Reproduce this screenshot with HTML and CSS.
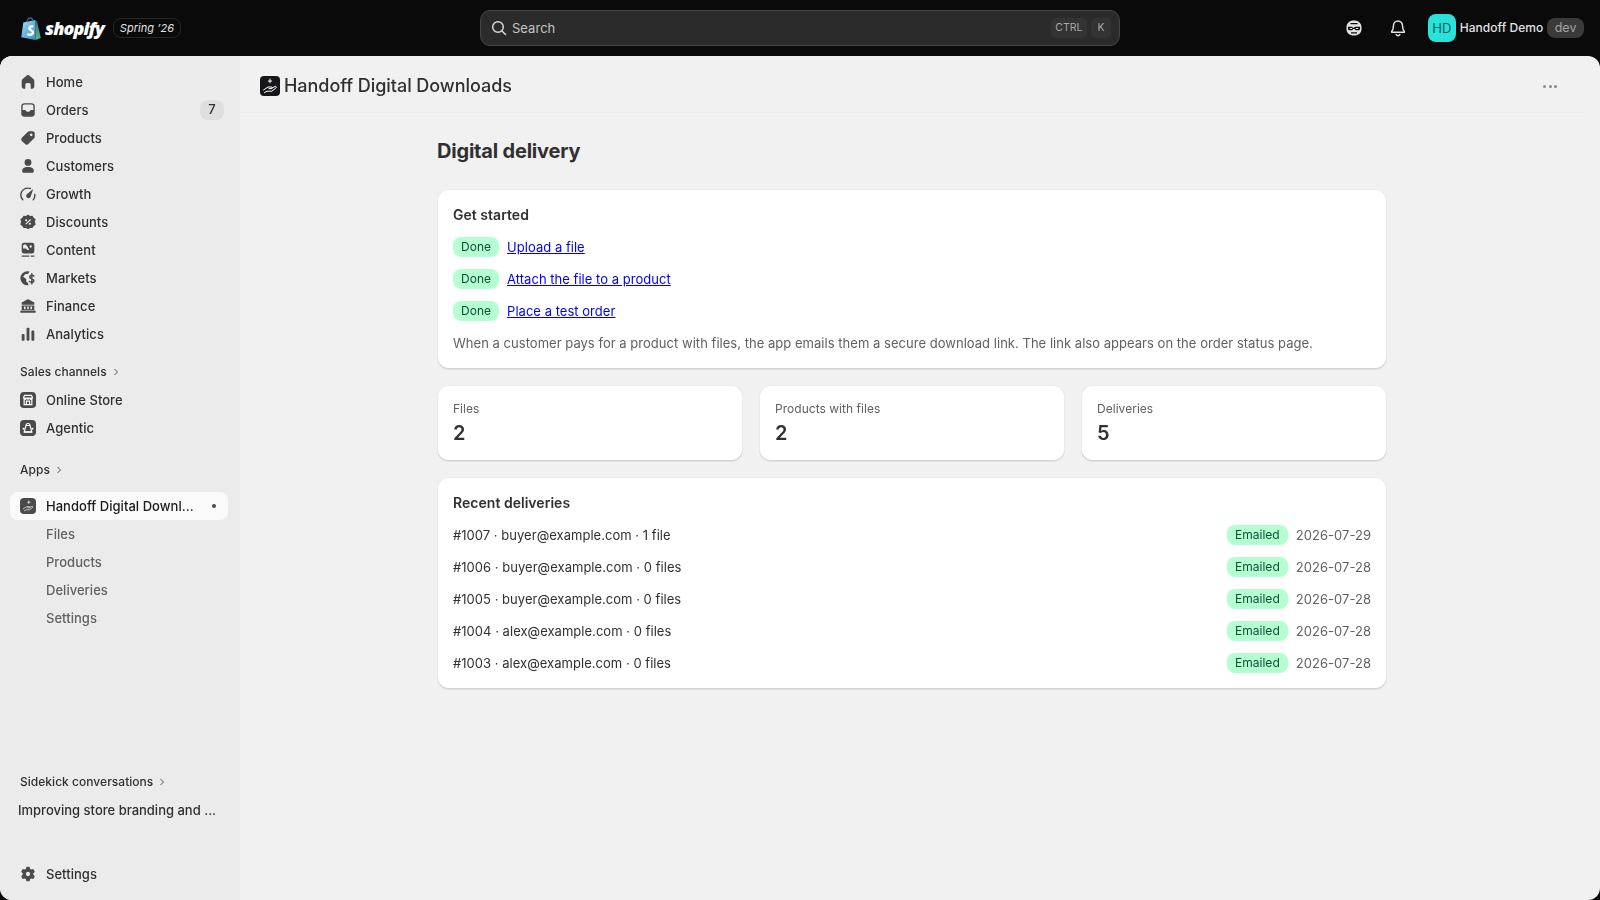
FILE: index.html
```html
<!DOCTYPE html>
<html lang="en">
<head>
<meta charset="utf-8">
<title>Handoff Digital Downloads</title>
<link rel="stylesheet" href="styles.css">
</head>
<body>
<header class="topbar">
  <div class="brand">
    <svg class="bag" width="20" height="23" viewBox="0 0 20 23"><defs><linearGradient id="bagl" x1="0" y1="0" x2="1" y2="1"><stop offset="0" stop-color="#a5dcef"/><stop offset="1" stop-color="#2f8fd0"/></linearGradient><linearGradient id="bagr" x1="0" y1="0" x2="0" y2="1"><stop offset="0" stop-color="#2b6ea5"/><stop offset="1" stop-color="#5cb870"/></linearGradient></defs><path d="M.3 20.300 2.300 5.600 14 3 14.500 23Z" fill="url(#bagl)"/><path d="M14 3 16 4.600 19.800 21 14.500 23Z" fill="url(#bagr)"/><path d="M12.700 8.600C11.500 8 7.600 7.800 7.200 11 6.900 13.800 10.800 13.800 10.600 15.800 10.500 17 8.500 17 6.500 15.900L6 18.200C8.300 19.500 12.700 19.200 13.100 15.800 13.400 12.800 9.800 12.600 9.900 11.200 10 10.300 11.300 10.200 12.200 10.600Z" fill="#fff"/><path d="M5.800 5C6.300 2.500 7.700.8 9.300.8 10.900.8 11.800 2.200 12 4.200" fill="none" stroke="#2d6fa5" stroke-width="1.200"/></svg>
    <span class="wordmark">shopify</span>
    <span class="edition">Spring ’26</span>
  </div>
  <div class="search">
    <svg class="search-icon" width="16" height="16" viewBox="0 0 16 16"><circle cx="7" cy="7" r="5.300" fill="none" stroke="#d8d8d8" stroke-width="1.500"/><path d="m11 11 3.500 3.500" stroke="#d8d8d8" stroke-width="1.500" stroke-linecap="round"/></svg>
    <span class="search-label">Search</span>
    <kbd class="key">CTRL</kbd>
    <kbd class="key">K</kbd>
  </div>
  <div class="top-actions">
    <svg class="top-icon sidekick" width="20" height="20" viewBox="0 0 20 20"><path fill-rule="evenodd" d="M10 2.500c4.600 0 7.500 2.700 7.500 7v1.500c0 4-2.900 6.500-7.500 6.500S2.500 15 2.500 11V9.500c0-4.300 2.900-7 7.500-7ZM4 8.700v2c0 .9.700 1.500 1.500 1.500h1.700c1 0 1.700-.5 2-1.300h1.600c.3.800 1 1.300 2 1.300h1.700c.8 0 1.500-.6 1.500-1.500v-2h-5l-1 1h-1l-1-1Zm1.800 1.400h2.500v.8H5.800Zm6 0h2.500v.8h-2.500ZM6.500 5v1.300h7V5Zm.5 9.300v1.200h6v-1.200Z" fill="#e3e3e3"/></svg>
    <svg class="top-icon bell" width="20" height="20" viewBox="0 0 20 20"><path d="M10 3a4.500 4.500 0 0 0-4.500 4.500c0 3.500-.8 4.800-1.800 6-.3.400 0 .8.400.8h11.800c.4 0 .7-.4.400-.8-1-1.200-1.800-2.500-1.800-6A4.500 4.500 0 0 0 10 3Z" fill="none" stroke="#e3e3e3" stroke-width="1.500" stroke-linejoin="round"/><path d="M8.200 16.500a2 2 0 0 0 3.600 0" fill="none" stroke="#e3e3e3" stroke-width="1.500" stroke-linecap="round"/></svg>
    <span class="avatar">HD</span>
    <span class="store-name">Handoff Demo</span>
    <span class="dev">dev</span>
  </div>
</header>
<div class="shell">
  <aside class="sidebar">
    <nav class="nav-main">
      <a class="nav-item"><svg class="nav-icon" viewBox="0 0 20 20"><path d="M9 2.600a1.600 1.600 0 0 1 2 0l5 4.200c.6.500 1 1.200 1 2V15a2.500 2.500 0 0 1-2.500 2.500H13V13a2 2 0 0 0-2-2H9a2 2 0 0 0-2 2v4.500H5.500A2.500 2.500 0 0 1 3 15V8.800c0-.8.400-1.500 1-2Z"/></svg>Home</a>
      <a class="nav-item"><svg class="nav-icon" viewBox="0 0 20 20"><path fill-rule="evenodd" d="M6 2.500h8A3.500 3.500 0 0 1 17.500 6v8a3.500 3.500 0 0 1-3.500 3.500H6A3.500 3.500 0 0 1 2.500 14V6A3.500 3.500 0 0 1 6 2.500ZM6 4a2 2 0 0 0-2 2v4h2.500c.6 0 1 .3 1.200.8.300.8 1.200 1.200 2.300 1.200s2-.4 2.300-1.200c.2-.5.600-.8 1.200-.8H16V6a2 2 0 0 0-2-2Z"/></svg>Orders<span class="count">7</span></a>
      <a class="nav-item"><svg class="nav-icon" viewBox="0 0 20 20"><path fill-rule="evenodd" d="M11.500 2.500H15A2.500 2.500 0 0 1 17.500 5v3.500c0 .7-.3 1.300-.7 1.800l-6.500 6.500a2.500 2.500 0 0 1-3.500 0l-3.600-3.600a2.500 2.500 0 0 1 0-3.500l6.500-6.500c.5-.4 1.100-.7 1.800-.7ZM13.500 8a1.500 1.500 0 1 0 0-3 1.500 1.500 0 0 0 0 3Z"/></svg>Products</a>
      <a class="nav-item"><svg class="nav-icon" viewBox="0 0 20 20"><circle cx="10" cy="6" r="3.800"/><path d="M3.500 15.500C3.500 12.500 6 11 10 11s6.500 1.500 6.500 4.500c0 1.200-.8 2-2 2h-9c-1.200 0-2-.8-2-2Z"/></svg>Customers</a>
      <a class="nav-item"><svg class="nav-icon" viewBox="0 0 20 20"><path class="nav-stroke" d="M4.200 16.500A7.700 7.700 0 0 1 10 3.500c.9 0 1.800.2 2.600.4M17.500 10.500a7.700 7.700 0 0 1-1.700 6"/><path d="M15.800 4.500 13 12.800a2.600 2.600 0 1 1-3.900-2.900Z"/></svg>Growth</a>
      <a class="nav-item"><svg class="nav-icon" viewBox="0 0 20 20"><path fill-rule="evenodd" d="m10 1.800 2.300 1.400 2.700-.1 1.300 2.300 2.200 1.500-.8 2.900.8 3.200-2.200 1.400-1.300 2.300-2.700-.1L10 18l-2.300-1.400-2.700.1-1.300-2.300L1.500 13l.8-3.200-.8-2.900 2.200-1.500L5 3.100l2.700.1Zm2.500 5-5.500 5.200.9.900 5.500-5.200ZM8 6.900a1.200 1.200 0 1 0 0 2.400 1.200 1.200 0 0 0 0-2.400Zm4 3.800a1.200 1.200 0 1 0 0 2.400 1.200 1.200 0 0 0 0-2.400Z"/></svg>Discounts</a>
      <a class="nav-item"><svg class="nav-icon" viewBox="0 0 20 20"><path fill-rule="evenodd" d="M5.500 2h9A2.500 2.500 0 0 1 17 4.500v7a2.500 2.500 0 0 1-2.500 2.500h-9A2.500 2.500 0 0 1 3 11.500v-7A2.500 2.500 0 0 1 5.500 2Zm7.500 2.700a1.300 1.300 0 1 0 0 2.600 1.300 1.300 0 0 0 0-2.600ZM4.500 5v3.200h3l2.500 2 1.200-.5-1-2.200-2.500-3.500H5.500Z"/><path d="M3 16h8.500v1.500H3Zm10 0h4v1.500h-4Z"/></svg>Content</a>
      <a class="nav-item"><svg class="nav-icon" viewBox="0 0 20 20"><path d="M9.800 2.500A7.800 7.800 0 1 0 10.500 18l-.5-2.500-2-1.500V11L4.500 8.500l2.500-3h3l1.700-2.700Z"/><path class="nav-stroke" d="M16.500 7.800c-.6-.6-1.400-.9-2.200-.9-1.400 0-2.400.8-2.400 2 0 2.500 4.600 1.500 4.600 4 0 1.200-1 2-2.400 2-.9 0-1.800-.4-2.400-1M14.300 5.300v11.500"/></svg>Markets</a>
      <a class="nav-item"><svg class="nav-icon" viewBox="0 0 20 20"><path fill-rule="evenodd" d="M9 2.700a2 2 0 0 1 2 0l6 3.300v2.500H3V6ZM3 9.500h14v5H3Zm2.500 1v3h1.800v-3Zm3.600 0v3h1.800v-3Zm3.600 0v3h1.800v-3ZM2.500 15h15c.5 0 1 .4 1 1v1.500h-17V16c0-.6.500-1 1-1Z"/></svg>Finance</a>
      <a class="nav-item"><svg class="nav-icon" viewBox="0 0 20 20"><rect x="3" y="10" width="3.200" height="7.500" rx="1.200"/><rect x="8.400" y="3" width="3.200" height="14.500" rx="1.200"/><rect x="13.800" y="6" width="3.200" height="11.500" rx="1.200"/></svg>Analytics</a>
    </nav>
    <div class="section-label channels-label">Sales channels<svg class="chev" viewBox="0 0 8 8"><path d="m2.500 1 3 3-3 3"/></svg></div>
    <nav class="nav-channels">
      <a class="nav-item"><svg class="nav-icon framed" viewBox="0 0 20 20"><rect width="20" height="20" rx="5" fill="#4a4a4a"/><path d="M4.700 8V6l1-1.800h8.600l1 1.800v2M5.200 8.500v7.300h9.600V8.500M8 15.800V11.500h4v4.300" fill="none" stroke="#fff" stroke-width="1.500"/><path d="M4.500 7h11v1.400a1.900 1.900 0 0 1-3.700 0 1.900 1.900 0 0 1-3.600 0 1.900 1.900 0 0 1-3.700 0Z" fill="#fff"/></svg>Online Store</a>
      <a class="nav-item"><svg class="nav-icon framed" viewBox="0 0 20 20"><rect width="20" height="20" rx="5" fill="#4a4a4a"/><path d="M7.500 6.800h5l2.200 8H5.300ZM7.500 6.800A2.500 2.500 0 0 1 12.500 6.800" fill="none" stroke="#fff" stroke-width="1.400" stroke-linejoin="round"/><circle cx="4.500" cy="11" r="1.300" fill="#fff"/><circle cx="15.500" cy="11" r="1.300" fill="#fff"/><path d="M4.500 15.200h11" stroke="#fff" stroke-width="1.400"/></svg>Agentic</a>
    </nav>
    <div class="section-label apps-label">Apps<svg class="chev" viewBox="0 0 8 8"><path d="m2.500 1 3 3-3 3"/></svg></div>
    <a class="nav-item app-active"><svg class="nav-icon framed" viewBox="0 0 20 20"><rect width="20" height="20" rx="5" fill="#4a4a4a"/><path d="M4 13.500 8.500 10.800h3c.9 0 .9 1.500 0 1.500H9.500M11.500 12l3.500-1.500c1-.4 1.600.6.800 1.300L12 14.800H7.500l-2 1.200M11 3.500v3.500M9.300 5.300h3.400" fill="none" stroke="#eee" stroke-width=".9" stroke-linecap="round" stroke-linejoin="round"/></svg><span class="app-name">Handoff Digital Downl...</span><span class="dot"></span></a>
    <nav class="subnav">
      <a class="sub-item">Files</a>
      <a class="sub-item">Products</a>
      <a class="sub-item">Deliveries</a>
      <a class="sub-item">Settings</a>
    </nav>
    <div class="sidebar-foot">
      <div class="section-label">Sidekick conversations<svg class="chev" viewBox="0 0 8 8"><path d="m2.500 1 3 3-3 3"/></svg></div>
      <div class="conversation">Improving store branding and ...</div>
      <a class="nav-item settings"><svg class="nav-icon" viewBox="0 0 20 20"><path fill-rule="evenodd" d="M8.300 2h3.400l.6 2.300 1.300.8 2.300-.6 1.700 3-1.700 1.700v1.600l1.700 1.700-1.700 3-2.300-.6-1.300.8-.6 2.300H8.300l-.6-2.300-1.300-.8-2.300.6-1.700-3 1.700-1.700V9.200L2.400 7.500l1.700-3 2.300.6 1.300-.8ZM10 7.600a2.400 2.400 0 1 0 0 4.800 2.400 2.400 0 0 0 0-4.800Z"/></svg>Settings</a>
    </div>
  </aside>
  <main class="main">
    <div class="app-header">
      <svg class="app-logo" width="20" height="20" viewBox="0 0 20 20"><rect width="20" height="20" rx="4" fill="#15151a"/><path d="M3.500 14 8 11h3.500c1 0 1 1.600 0 1.600H9M11.500 12.200l3.500-1.700c1.100-.5 1.800.7.900 1.500l-4 3.200H7l-2.500 1.400M10 3v3.800M8.300 5h3.400" fill="none" stroke="#fff" stroke-width="1" stroke-linecap="round" stroke-linejoin="round"/></svg>
      <span class="app-title">Handoff Digital Downloads</span>
      <span class="more"><i></i><i></i><i></i></span>
    </div>
    <div class="page">
      <h1 class="page-title">Digital delivery</h1>
      <section class="card">
        <h2 class="card-title">Get started</h2>
        <div class="step"><span class="badge">Done</span><a class="link" href="#">Upload a file</a></div>
        <div class="step"><span class="badge">Done</span><a class="link" href="#">Attach the file to a product</a></div>
        <div class="step"><span class="badge">Done</span><a class="link" href="#">Place a test order</a></div>
        <p class="note">When a customer pays for a product with files, the app emails them a secure download link. The link also appears on the order status page.</p>
      </section>
      <div class="stats">
        <section class="card stat"><div class="stat-label">Files</div><div class="stat-value">2</div></section>
        <section class="card stat"><div class="stat-label">Products with files</div><div class="stat-value">2</div></section>
        <section class="card stat"><div class="stat-label">Deliveries</div><div class="stat-value">5</div></section>
      </div>
      <section class="card">
        <h2 class="card-title">Recent deliveries</h2>
        <div class="row"><span class="row-text">#1007 · buyer@example.com · 1 file</span><span class="badge">Emailed</span><span class="date">2026-07-29</span></div>
        <div class="row"><span class="row-text">#1006 · buyer@example.com · 0 files</span><span class="badge">Emailed</span><span class="date">2026-07-28</span></div>
        <div class="row"><span class="row-text">#1005 · buyer@example.com · 0 files</span><span class="badge">Emailed</span><span class="date">2026-07-28</span></div>
        <div class="row"><span class="row-text">#1004 · alex@example.com · 0 files</span><span class="badge">Emailed</span><span class="date">2026-07-28</span></div>
        <div class="row"><span class="row-text">#1003 · alex@example.com · 0 files</span><span class="badge">Emailed</span><span class="date">2026-07-28</span></div>
      </section>
    </div>
  </main>
</div>
</body>
</html>
```
FILE: styles.css
```css
* { box-sizing: border-box; }
html, body { margin: 0; height: 100%; overflow: hidden; }
body {
  background: #0a0a0a;
  font-family: Inter, "Liberation Sans", sans-serif;
  font-size: 13px;
  line-height: 20px;
  letter-spacing: .03px;
  color: #303030;
  display: flex;
  flex-direction: column;
  height: 900px;
}

/* top bar */
.topbar { height: 56px; flex: none; display: flex; align-items: center; padding: 0 16px 0 20px; color: #e3e3e3; }
.brand { display: flex; align-items: center; width: 460px; flex: none; }
.bag { flex: none; margin-left: 1px; }
.wordmark { font-family: "Open Sans", sans-serif; font-weight: 800; font-style: italic; font-size: 18px; letter-spacing: -.9px; color: #fff; margin-left: 4px; line-height: 24px; }
.edition { margin-left: 9px; height: 20px; padding: 0 6px; border: 1px solid #262626; border-radius: 8px; font-size: 11px; line-height: 18px; font-style: italic; color: #e3e3e3; }
.search { width: 640px; height: 36px; flex: none; background: #2b2b2b; border: 1px solid #454545; border-radius: 10px; display: flex; align-items: center; padding: 0 8px 0 10px; }
.search-icon { margin-right: 5px; }
.search-label { flex: 1; color: #c4c4c4; font-size: 13px; }
.key { font-family: Inter, sans-serif; font-size: 10.500px; line-height: 20px; height: 20px; min-width: 20px; padding: 0 4.500px; margin-left: 4px; background: #333; border-radius: 5px; color: #a8a8a8; text-align: center; }
.top-actions { flex: 1; display: flex; align-items: center; justify-content: flex-end; }
.top-icon { flex: none; }
.sidekick { margin-right: 24px; }
.bell { margin-right: 20px; }
.avatar { width: 28px; height: 28px; flex: none; border-radius: 8px; background: #29e3da; color: #0f5c5c; font-size: 13px; line-height: 28px; text-align: center; }
.store-name { margin-left: 4px; font-size: 12px; font-weight: 500; color: #e3e3e3; }
.dev { margin-left: 4px; height: 20px; padding: 0 7.500px; border-radius: 8px; background: #3a3a3a; color: #a3a3a3; font-size: 12.500px; line-height: 20px; }

/* frame */
.shell { flex: 1; display: flex; min-height: 0; border-radius: 12px; overflow: hidden; background: #f1f1f1; }
.sidebar { width: 240px; flex: none; background: #ebebeb; display: flex; flex-direction: column; padding: 12px 12px 0 10px; will-change: transform; }
.nav-main { display: flex; flex-direction: column; }
.nav-item { height: 28px; display: flex; align-items: center; padding-left: 10px; font-weight: 500; font-size: 13px; color: #303030; text-decoration: none; }
.nav-icon { width: 18px; height: 18px; margin: 0 9px 0 -1px; flex: none; fill: #4a4a4a; }
.nav-icon.framed { width: 16px; height: 16px; margin: 0 10px 0 0; }
.nav-stroke { fill: none; stroke: #4a4a4a; stroke-width: 1.600; stroke-linecap: round; }
.count { margin-left: auto; margin-right: 4px; width: 24px; height: 20px; border-radius: 8px; background: #dedede; text-align: center; font-size: 13px; line-height: 19px; font-weight: 500; }
.section-label { display: flex; align-items: center; padding: 1px 0 0 10px; font-size: 12px; font-weight: 500; color: #303030; height: 20px; }
.chev { width: 8px; height: 8px; margin-left: 5px; fill: none; stroke: #555; }
.channels-label { margin-top: 13px; margin-bottom: 5px; }
.apps-label { margin-top: 17px; margin-bottom: 13px; }
.app-active { background: #fafafa; border-radius: 8px; padding-right: 12px; color: #1a1a1a; }
.app-name { flex: 1; white-space: nowrap; overflow: hidden; }
.dot { width: 4px; height: 4px; border-radius: 50%; background: #4a4a4a; }
.subnav { display: flex; flex-direction: column; }
.sub-item { height: 28px; line-height: 28px; padding-left: 36px; font-weight: 500; color: #616161; }
.sidebar-foot { margin-top: auto; display: flex; flex-direction: column; padding-bottom: 12px; }
.conversation { margin: 9px 0 0 8px; font-weight: 500; color: #303030; white-space: nowrap; height: 20px; letter-spacing: 0; }
.settings { margin-top: 40px; }

/* main */
.main { flex: 1; min-width: 0; display: flex; flex-direction: column; }
.app-header { height: 57px; flex: none; display: flex; align-items: center; padding: 4px 27px 0 20px; margin-right: 16px; border-bottom: 1px solid #ebebeb; will-change: transform; }
.app-logo { flex: none; margin-right: 4px; }
.app-title { flex: 1; font-size: 18px; font-weight: 500; line-height: 24px; letter-spacing: -.05px; }
.more { display: flex; gap: 2.500px; }
.more i { width: 3px; height: 3px; border-radius: 50%; background: #8a8a8a; }
.page { width: 950px; margin-left: 197px; display: flex; flex-direction: column; gap: 16px; }
.page-title { margin: 24px 0 8px; font-size: 20px; line-height: 28px; font-weight: 650; letter-spacing: -.2px; }
.card { background: #fff; border-radius: 12px; padding: 16px; display: flex; flex-direction: column; gap: 12px; box-shadow: inset 0 0 0 1px rgba(0,0,0,.08), inset 0 -1px 0 rgba(0,0,0,.1), 0 1px 0 rgba(26,26,26,.07); will-change: transform; }
.card-title { margin: 0; font-size: 14px; line-height: 20px; font-weight: 600; }
.step { height: 20px; display: flex; align-items: center; gap: 8px; }
.badge { height: 20px; padding: 0 8px; border-radius: 8px; background: #b4fed2; color: #0c5132; font-size: 12px; line-height: 20px; flex: none; }
.link { color: #0000ee; font-size: 13px; text-decoration: underline; }
.note { margin: 0; color: #616161; font-size: 13px; }
.stats { display: grid; grid-template-columns: repeat(3, 1fr); gap: 16px; }
.stat { gap: 4px; }
.stat-label { font-size: 12px; line-height: 16px; color: #616161; }
.stat-value { font-size: 20px; line-height: 24px; font-weight: 600; }
.row { height: 20px; display: flex; align-items: center; gap: 8px; }
.row-text { flex: 1; color: #303030; }
.date { color: #616161; font-size: 13px; }
```
